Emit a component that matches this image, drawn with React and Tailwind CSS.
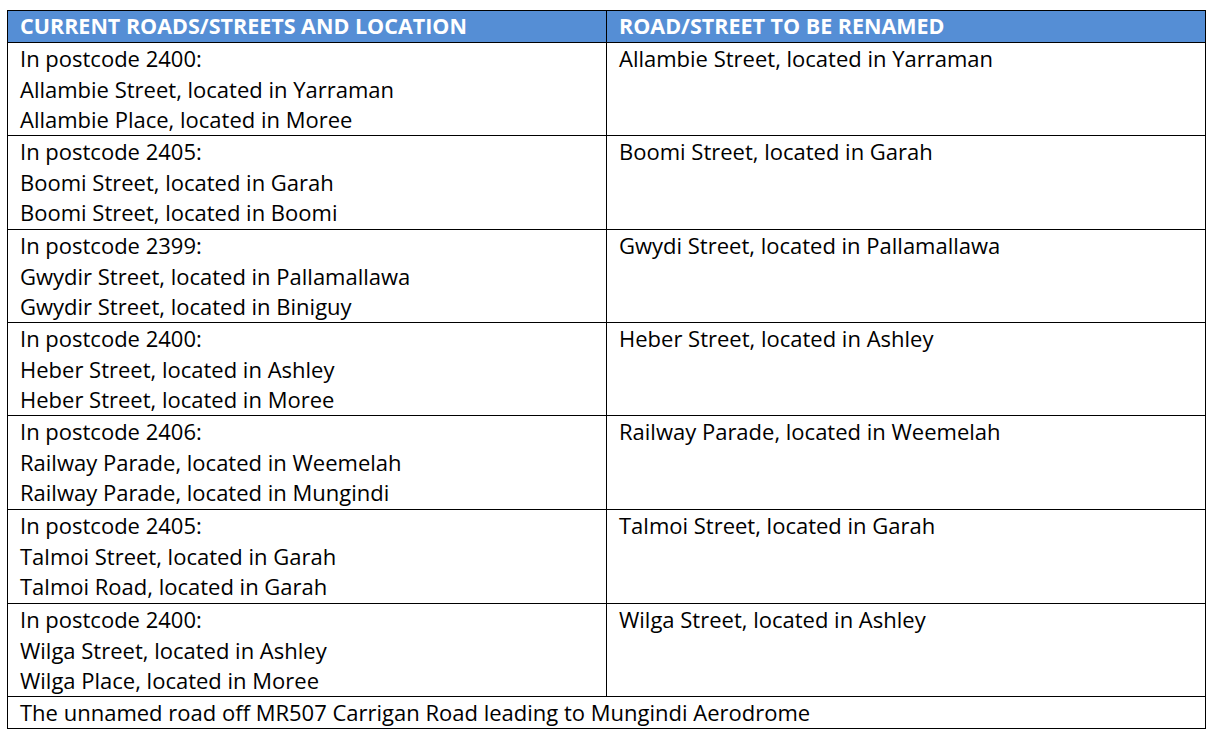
import React from "react";

const rows = [
  ["2400", "Allambie Street, located in Yarraman", "Allambie Place, located in Moree", "Allambie Street, located in Yarraman", "h-[93px]"],
  ["2405", "Boomi Street, located in Garah", "Boomi Street, located in Boomi", "Boomi Street, located in Garah", "h-[94px]"],
  ["2399", "Gwydir Street, located in Pallamallawa", "Gwydir Street, located in Biniguy", "Gwydi Street, located in Pallamallawa", "h-[93px]"],
  ["2400", "Heber Street, located in Ashley", "Heber Street, located in Moree", "Heber Street, located in Ashley", "h-[93px]"],
  ["2406", "Railway Parade, located in Weemelah", "Railway Parade, located in Mungindi", "Railway Parade, located in Weemelah", "h-[94px]"],
  ["2405", "Talmoi Street, located in Garah", "Talmoi Road, located in Garah", "Talmoi Street, located in Garah", "h-[94px]"],
  ["2400", "Wilga Street, located in Ashley", "Wilga Place, located in Moree", "Wilga Street, located in Ashley", "h-[93px]"],
];

export default function App() {
  return (
    <div className="w-[1216px] h-[741px] bg-white pt-[10px] pl-[7px]" style={{ fontFamily: "'Open Sans', Lato, sans-serif" }}>
      <div className="w-[1199px] border border-black text-[22px] leading-[30.5px] text-black">
        <div className="grid grid-cols-[599px_1fr] h-[32px] bg-[#558ed5] text-white font-bold text-[21.5px] border-b border-black">
          <div className="pl-[12px] border-r border-black leading-[30px]">CURRENT ROADS/STREETS AND LOCATION</div>
          <div className="pl-[12px] leading-[30px]">ROAD/STREET TO BE RENAMED</div>
        </div>
        {rows.map((r, i) => (
          <div key={i} className={`grid grid-cols-[599px_1fr] border-b border-black ${r[4]}`}>
            <div className="pl-[12px] border-r border-black">
              <div>In postcode {r[0]}:</div>
              <div>{r[1]}</div>
              <div>{r[2]}</div>
            </div>
            <div className="pl-[12px]">{r[3]}</div>
          </div>
        ))}
        <div className="h-[31px] pl-[12px]">The unnamed road off MR507 Carrigan Road leading to Mungindi Aerodrome</div>
      </div>
    </div>
  );
}
